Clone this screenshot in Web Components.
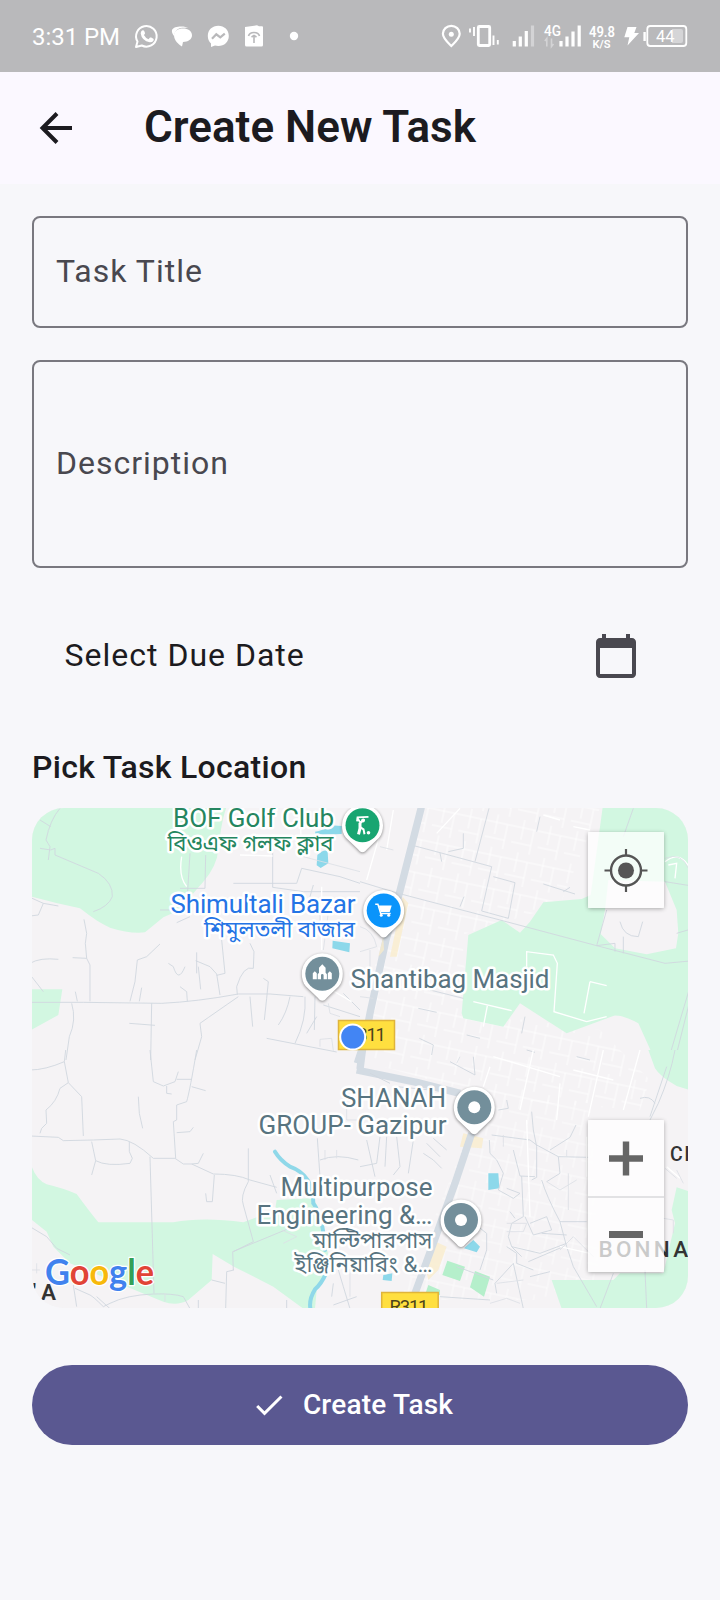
<!DOCTYPE html>
<html lang="en">
<head>
<meta charset="utf-8">
<title>Create New Task</title>
<style>
html,body{margin:0;background:#f7f7fa}
body{font-family:Roboto,"Noto Sans",sans-serif;color:#1c1b20}
</style>
</head>
<body>
<task-screen>
  <status-bar slot="top"></status-bar>
  <app-bar slot="top">Create New Task</app-bar>
  <outlined-field style="--h:112px">Task Title</outlined-field>
  <outlined-field style="--h:208px">Description</outlined-field>
  <date-row>Select Due Date</date-row>
  <section-title>Pick Task Location</section-title>
  <location-map></location-map>
  <filled-button>Create Task</filled-button>
</task-screen>
<script>
const define = (name, html) => {
  const t = document.createElement('template');
  t.innerHTML = html;
  customElements.define(name, class extends HTMLElement {
    constructor() {
      super();
      this.attachShadow({mode: 'open'}).appendChild(t.content.cloneNode(true));
    }
  });
};

define('task-screen', `
<style>
:host{display:flex;flex-direction:column;width:720px;height:1600px;overflow:hidden;background:#f7f7fa}
main{display:flex;flex-direction:column;padding:32px;gap:32px}
</style>
<slot name="top"></slot><main><slot></slot></main>`);

define('status-bar', `
<style>
:host{display:flex;height:72px;background:#b9b9bb;color:#fff;box-sizing:border-box;padding-left:32px;padding-right:30px}
.time{width:96px;font-size:24px;line-height:75px;white-space:nowrap;letter-spacing:-.05px}
svg{display:block;height:72px;flex:none;fill:#fff;font-family:Roboto,sans-serif}
.space{flex:1}
</style>
<span class="time">3:31 PM</span>
<svg width="36" viewBox="128 0 36 72"><path d="M136 47l1.500-5.500a10.300 10.300 0 1 1 4.300 4z" fill="none" stroke="#fff" stroke-width="2" stroke-linejoin="round"/><path d="M142 30.500q1.600-.8 2.200.6l.8 2q.2.800-1.100 2 1.600 3 4.600 4.200l1.500-1.700q.5-.4 1.200 0l2.200 1.100q.8.500 0 2-1.200 1.800-3.600 1.600-8-1.500-9.100-8.800 0-1.900 1.300-3z"/></svg>
<svg width="36" viewBox="164 0 36 72"><path d="M172 30c1-2.500 5-3.500 9-3.500 3.500 0 6 .6 7 1.500-5-.8-13-1-14 8-1.500-2-2.500-4-2-6z"/><path d="M183 28.500c5 0 9 2.500 9 6.700 0 4-4 6.700-9 6.700l-1 4.600c-3-2-8-6-8-11.300 0-4.200 4-6.700 9-6.700z"/></svg>
<svg width="36" viewBox="200 0 36 72"><path d="M218.300 25.800c6 0 10.500 4.200 10.500 10.200s-4.500 10-10.500 10c-1.300 0-2.300-.2-3.300-.5l-4 1.400v-3.500c-2-1.800-3.200-4.200-3.200-7.400 0-6 4.500-10.200 10.500-10.200z"/><path d="M212 38.800l4.300-4.500 4 3 4.500-3.700" fill="none" stroke="#b9b9bb" stroke-width="2.200"/></svg>
<svg width="36" viewBox="236 0 36 72"><path d="M245 27l12-1.700 2 1h3q1 0 1 1V45q0 1.600-1.500 1.600h-15q-1.500 0-1.500-1.600z"/><path d="M248.500 36q1-3.500 5.500-3.500t5.500 3.500M254 43v-7M251.500 37l2.500-1.500 2.500 1.500" fill="none" stroke="#b9b9bb" stroke-width="1.600"/></svg>
<svg width="36" viewBox="272 0 36 72"><circle cx="294" cy="36" r="4.200"/></svg>
<span class="space"></span>
<svg width="28" viewBox="436 0 28 72"><path d="M451.300 46c-3-3-8.400-7.500-8.400-12.200a8.400 8 0 0 1 16.800 0c0 4.700-5.400 9.200-8.400 12.200z" fill="none" stroke="#fff" stroke-width="2.200"/><circle cx="451.300" cy="34.300" r="2.500"/></svg>
<svg width="40" viewBox="464 0 40 72"><rect x="478.300" y="26.500" width="11.400" height="19" rx="1" fill="none" stroke="#fff" stroke-width="2.800"/><path d="M470 28.500v4M474 27v9M493.500 35.500v9.500M497.800 40v4.500" stroke="#fff" stroke-width="1.900"/></svg>
<svg width="36" viewBox="504 0 36 72"><path d="M514.300 41v5.500M520.300 36.500v10M526.300 31v15.500" stroke="#fff" stroke-width="3.200"/><path d="M532.500 25.500v21" stroke="#d3d3d5" stroke-width="3.200"/></svg>
<svg width="44" viewBox="540 0 44 72"><text x="544" y="36.300" font-size="14.500" font-weight="500" textLength="17" lengthAdjust="spacingAndGlyphs">4G</text><path d="M546.800 46.500v-8l-2 2.500M551.500 38.500v8l2-2.500" fill="none" stroke="#d3d3d5" stroke-width="1.600"/><path d="M561 41v5.500M567 36.500v10M573 31.500v15M579.200 25.500v21" stroke="#fff" stroke-width="3.200"/></svg>
<svg width="34" viewBox="584 0 34 72"><text x="589" y="37" font-size="14" font-weight="600" textLength="26" lengthAdjust="spacingAndGlyphs">49.8</text><text x="592.500" y="47.800" font-size="11" font-weight="600" textLength="18" lengthAdjust="spacingAndGlyphs">K/S</text></svg>
<svg width="24" viewBox="618 0 24 72"><path d="M627.500 27h9l-2.200 6h4.700l-11.500 12.500 1.800-8.300h-5z"/></svg>
<svg width="48" viewBox="642 0 48 72"><rect x="647.300" y="26" width="39" height="20" rx="3" fill="none" stroke="#fff" stroke-width="1.800"/><path d="M672 29h9q2 0 2 2v10q0 2-2 2h-9z" fill="#d5d5d7"/><path d="M644.600 32v9" stroke="#fff" stroke-width="2.400"/><text x="656" y="42" font-size="17" textLength="18.500" lengthAdjust="spacingAndGlyphs">44</text></svg>`);

define('app-bar', `
<style>
:host{display:flex;align-items:center;height:112px;background:#fbf8ff;padding-left:32px}
svg{flex:none;margin-right:64px}
h1{margin:0;font-size:44px;line-height:52px;font-weight:600;white-space:nowrap;padding-bottom:2px;letter-spacing:.03px}
</style>
<svg width="48" height="48" viewBox="0 0 48 48"><path d="M40 24H10.500M25 9.500L10.500 24 25 38.500" fill="none" stroke="#1c1b20" stroke-width="4"/></svg>
<h1><slot></slot></h1>`);

define('outlined-field', `
<style>
:host{display:flex;align-items:center;box-sizing:border-box;height:var(--h);border:2px solid #79787f;border-radius:8px;padding:0 22px 2px;color:#49484f;font-size:32px;line-height:48px;letter-spacing:1px}
</style>
<span><slot></slot></span>`);

define('date-row', `
<style>
:host{display:flex;align-items:center;justify-content:space-between;height:112px;box-sizing:border-box;padding:0 48px 0 32.500px;font-size:32px;letter-spacing:1px}
span{padding-bottom:2px}
</style>
<span><slot></slot></span>
<svg width="48" height="48" viewBox="0 0 24 24" fill="#49484f"><path d="M20 3h-1V1h-2v2H7V1H5v2H4c-1.100 0-2 .9-2 2v16c0 1.100.9 2 2 2h16c1.100 0 2-.9 2-2V5c0-1.100-.9-2-2-2zm0 18H4V8h16v13z"/></svg>`);

define('section-title', `
<style>
:host{display:block;height:48px;margin-bottom:-16px;font-size:32px;line-height:46px;font-weight:500;letter-spacing:.3px}
</style><slot></slot>`);

define('map-button', `
<style>
:host{display:flex;align-items:center;justify-content:center;width:76px;height:76px;background:rgba(255,255,255,.74)}
</style><slot></slot>`);

define('location-map', `
<style>
:host{display:block;position:relative;height:500px;border-radius:32px;overflow:hidden;background:#f5f4f5}
.map{display:block;width:656px;height:500px}
.ctl{position:absolute;right:24px;box-shadow:0 1px 4px rgba(0,0,0,.3);border-radius:2px}
.loc{top:24px}
.zoom{top:312px}
.zoom map-button+map-button{box-shadow:inset 0 2px #e2e2e4}
text{font-family:Roboto,"Noto Sans Bengali","Noto Sans",sans-serif}
.lb{font-size:26px;paint-order:stroke;stroke:#fff;stroke-width:5px;stroke-linejoin:round;text-anchor:end}
.bn{font-size:22px}
.road{fill:none;stroke:#d0d7df;stroke-width:2.700;stroke-linejoin:round}
.lane{fill:none;stroke:#fff;stroke-width:4}
.thin{fill:none;stroke:#dce0e6;stroke-width:2.500}
.park{fill:#d2f7e1}
.hw{fill:none;stroke:#d3dbe3;stroke-linejoin:round}
.water{fill:#8cd8ea}
.river{fill:none;stroke:#8fd8e9;stroke-width:12;stroke-linecap:round}
.town{fill:#faecc9;opacity:.75}
.pin path{fill:#fff;filter:drop-shadow(0 1px 1.500px rgba(0,0,0,.45))}
</style>
<svg class="map" viewBox="32 808 656 500">
<defs>
<pattern id="blocks" width="27" height="33" patternUnits="userSpaceOnUse" patternTransform="rotate(12)"><path d="M0 8H27M9 0V20M20 8V33M0 24H20" stroke="#fff" stroke-width="1" fill="none" opacity=".8"/></pattern>
</defs>
<rect x="32" y="808" width="656" height="500" fill="#f5f3f5"/>
<path fill="url(#blocks)" d="M426 808H600L560 905 462 935 468 1012 600 1030 650 1080 640 1110 500 1100 360 1060 380 935z"/>
<path fill="url(#blocks)" opacity=".8" d="M480 1100H590L600 1300H400L450 1180z"/>

<g transform="translate(30 800) scale(.33333)">
<path class="park" d="M0 20H590C575 60 570 110 565 150Q560 200 520 245Q480 290 450 330L400 352Q360 385 345 397Q300 402 240 383C200 365 170 340 150 325Q80 310 6 290zM0 568L97 568 85 645 0 692z"/>
<path class="water" d="M855 95Q880 93 890 75L935 78 935 102 858 105zM862 165Q885 145 893 155L895 190 872 204 860 196zM908 422L960 430 958 457 907 445z"/>
<path class="road" d="M90 25Q60 60 48 120L60 140 55 180M30 60L62 80M30 145L62 150 75 145 75 165 205 220Q250 250 247 290 235 320 190 335M0 348L25 345 40 310 0 292M40 310L85 318M162 358L170 400 166 430 170 475 180 495 180 604M128 473L170 475M0 490Q30 472 85 478M5 530L40 575M136 575L142 604M0 607L160 607 395 610Q500 605 625 582L720 582 820 590M390 432L350 470 322 480 315 545 300 604M335 563L328 604M365 610L362 780M298 670L375 676M125 610Q140 660 118 710L108 780M625 590Q560 635 510 670L515 710 495 780M415 490L430 500Q445 550 465 500M500 457L500 520M497 482L540 500 560 522 570 585M505 500L512 568M450 560L470 575 472 604M575 420L585 520 560 526M660 430L672 455 670 505Q640 495 620 560L622 584M700 535L715 545 710 595 703 660M660 590L668 680M780 590Q770 640 745 675M825 590Q830 660 795 730M710 715L920 756M610 250L800 250 815 205 930 230 990 250M728 155L728 262 820 275 990 275M480 160L472 290M527 165L525 265 450 265M440 368L480 350M390 330L450 330M850 255L840 290M940 580L990 630M855 590L853 690M860 650L830 700M880 615L990 650"/>
<path class="lane" d="M455 170Q445 230 470 260M630 165L728 168M810 25L815 170M780 300L940 325M875 260V450M905 570L965 605"/>
<path class="thin" d="M870 740L870 718 905 715 910 752M820 170L990 215M870 300V390M900 300L880 450M895 610L900 640 930 650"/>
</g>

<g transform="translate(360 800) scale(.33333)">
<path class="park" d="M728 22H990V780H885L835 670Q790 645 762 647L620 700 480 610 430 680 310 655 305 640 325 405 425 360 480 398 510 365 550 307 665 297 692 285z"/>
<path d="M745 240L915 245 950 330 955 400 948 445 860 463 765 445 722 402 735 330z" fill="#f5f3f5"/>
<path class="hw" stroke-width="22" d="M184 22L118 280 78 420 30 640 15 720 -8 790"/>
<path class="town" d="M128 290L145 310 110 470 90 470zM70 410L55 470 72 450z"/>
<path class="road" d="M0 245L115 280 420 360 710 437 915 490 990 483M387 25L345 185M165 138L240 158 395 200 365 333 445 355 465 248 400 230M240 158L245 185M265 155L310 145 310 100M820 25L790 110M740 330L710 437 765 430V455M780 365Q790 410 835 410L848 365M790 410V460M540 50L530 95M550 252L645 282M610 275L630 262M300 320L312 290M990 560L925 780M990 600L945 780M175 625L230 637M210 570L310 595M320 705L360 715M500 750L525 757M178 715L220 735 215 765M495 650L485 700M950 400L990 388M915 245L990 257"/>
<path class="lane" d="M500 500V455L580 465 592 490 582 635 680 665M690 545L740 557M690 545L672 640M340 605L455 632M382 618L370 680M680 665L740 650M550 45L600 60M640 80L690 90M915 185Q960 150 990 205M925 195L950 190 945 235M300 25L230 100M60 100L20 240M100 30L80 150"/>
<path class="thin" d="M915 175Q965 155 985 205M0 380Q40 390 50 440L0 455M30 450V520M60 140L100 150M0 590L40 595"/>
</g>

<g transform="translate(30 1050) scale(.33333)">
<path class="park" d="M6 352Q20 390 50 403 100 415 140 432Q175 480 205 517H430Q520 500 640 517L735 480 740 450 840 445Q870 455 870 520L905 650 860 720 855 776H820L730 710 612 650 548 612 545 690 475 750Q440 770 400 755L120 640 70 590 50 545 6 510z"/>
<path class="river" d="M735 305Q750 330 780 350 850 375 850 460M850 460Q880 500 885 600M888 670Q875 700 855 718 835 750 842 780" />
<path class="road" d="M0 60Q45 60 103 35L107 0M103 35L115 98 155 140 160 258M115 98L90 115Q80 155 48 180L50 220 35 235 30 250M0 258L85 262 100 272 190 270 270 267Q310 270 370 325L435 325 460 342 485 342 550 372Q620 372 660 390L740 412M185 275L197 332Q230 350 300 340L307 325 298 305V275M197 332L185 375M360 320L372 730M360 0L370 95 400 108 435 95 445 65M440 88L485 88M410 108V130L425 132M500 0Q480 120 470 155L440 165 440 210 430 215 437 325M440 248L480 245 490 232M325 140L328 190 338 235M485 110L527 122M655 295V395Q630 440 640 465L670 575M553 375L547 455 530 455 527 430M520 310L505 340 485 342M610 660L608 605 790 530M670 575L610 605M612 660L590 665 587 776M370 732Q290 735 240 760L220 770Q190 740 180 735L135 715M370 732Q430 730 460 740L480 776M545 690L585 700M0 530L50 560 80 595 120 615M130 705L140 770M200 740L240 776M925 660L940 710 960 776M910 700L905 740M910 765L980 740M862 265L870 380M870 330Q920 310 985 330M720 375L740 430M505 750V776M770 750V776"/>
<path class="thin" d="M755 540L800 560 760 580M20 640V670M0 660H30M405 730V755M960 640V740M885 330V300M920 325V300M950 170V210H990"/>
</g>

<g transform="translate(360 1050) scale(.33333)">
<path class="park" d="M865 0H990V120L950 108Q900 80 885 55zM575 690L760 690 780 670H910L945 520 935 480 950 412 990 425V776H605z"/>
<path class="water" d="M385 370H415L418 415 385 420zM340 570L360 590 350 607 312 595zM70 675L97 670 95 693 68 690z"/>
<path fill="#b5efcb" d="M262 632L315 650 300 693 247 675zM345 663L390 680 372 740 330 712zM205 705L240 720 240 735H195z"/>
<path class="town" d="M310 250L370 265 365 295 300 290zM215 570L260 590 235 660 205 690 195 650z"/>
<path class="hw" stroke-width="22" d="M10 -20L0 58"/>
<path class="hw" stroke-width="22" d="M-10 60L170 97 300 130"/>
<path class="hw" stroke-width="22" d="M335 250L285 400 220 580 165 730"/>
<path class="road" d="M945 0Q930 80 895 160L870 210M920 50L870 200M840 145Q870 135 885 160M760 670L720 776M855 660L860 776M515 185L520 240 530 290V382L515 390M395 255L510 270 530 285 595 320 685 322M570 300L630 262 648 225M460 300L480 378 525 380M545 390Q560 440 600 515L620 590 640 650 710 770M485 378L490 500 455 520 445 560 455 590 485 620M510 520L560 500 575 540 520 555 495 500M545 550L620 555M455 590L540 610 620 580M600 515H680M415 420L430 370 410 330 390 310 388 270M415 420L460 445 480 430 440 415M520 660L470 640V610L440 590M505 635L610 590M450 485L465 505M595 320L600 370 560 395M460 640L490 776M460 640L405 700 410 730M270 35L345 75 340 20M30 70L90 100M110 110L210 120M300 530L290 480 380 550V600L360 660M290 650L400 690M240 740L390 750M190 310L220 330 245 355M220 265L260 300M200 280L240 320M0 350L50 340 60 260M20 270L45 380M80 260L75 350M110 260L120 350 100 375M160 270L145 370M440 150L445 175 415 180M650 20L690 30M510 680L570 665"/>
<path class="lane" d="M730 0L685 200M520 0L480 180M640 60L760 90M840 0L790 180M400 20L600 80M390 50L370 110M920 350L960 385M500 210L510 500M600 100L590 210M680 260V380M600 590L690 610"/>
<path class="thin" d="M440 520H500L490 545H440M390 760L440 745 480 760M290 40L300 20M620 320V300M600 600L640 560 700 620M950 360L970 400M915 355L950 385M410 700L490 690M430 255V290M625 370V480M650 390L600 420 560 395M910 505L940 510V550"/>
</g>
<g font-weight="500" fill="#333" font-size="22.500">
<text x="670" y="1160.700" font-size="19.500" letter-spacing="1.500">CI</text>
<text x="598.500" y="1256.700" letter-spacing="3.200">BONNA</text>
<text x="32.500" y="1300">'</text><text x="41" y="1300" font-weight="600">A</text>
</g>
<g>
<rect x="338.500" y="1020.500" width="56" height="29" fill="#ffdf3f" stroke="#dfb43b" stroke-width="1.500"/><text x="347" y="1041" font-size="18.500" fill="#4b431b" textLength="39">R311</text>
<rect x="381.700" y="1292.500" width="56.500" height="29" fill="#ffdf3f" stroke="#dfb43b" stroke-width="1.500"/><text x="389.500" y="1313" font-size="18.500" fill="#4b431b" textLength="39">R311</text>
<circle cx="352.700" cy="1037" r="13.500" fill="#fff"/><circle cx="352.700" cy="1037" r="11.500" fill="#4285f4"/>
</g>
<g class="lb" fill="#258660">
<text x="334" y="827" textLength="161">BOF Golf Club</text><text class="bn" x="333.500" y="851" textLength="166" lengthAdjust="spacingAndGlyphs">বিওএফ গলফ ক্লাব</text></g>
<g class="lb" fill="#2474e5"><text x="355.500" y="912.700" textLength="185">Shimultali Bazar</text><text class="bn" x="355" y="936.500" textLength="151" lengthAdjust="spacingAndGlyphs">শিমুলতলী বাজার</text></g>
<g class="lb" fill="#587480">
<text x="549.500" y="987.700" textLength="199">Shantibag Masjid</text>
<text x="446" y="1107" textLength="105">SHANAH</text><text x="446.500" y="1134" textLength="188">GROUP- Gazipur</text>
<text x="432.500" y="1196.400" textLength="152">Multipurpose</text><text x="432.500" y="1224" textLength="176">Engineering &amp;…</text>
<text class="bn" x="432.500" y="1248" textLength="120" lengthAdjust="spacingAndGlyphs">মাল্টিপারপাস</text><text class="bn" x="432.500" y="1271.700" textLength="138" lengthAdjust="spacingAndGlyphs">ইঞ্জিনিয়ারিং &amp;…</text>
</g>
<g class="pin" transform="translate(362.500 825.300)"><path d="M0 27c-1.800 0-3-1.300-4.500-3L-16.500 12.500C-19.500 9-20.500 4-20.500 0a20.500 20.500 0 0 1 41 0c0 4-1 9-4 12.500L4.500 24C3 25.700 1.800 27 0 27z"/><circle r="17" fill="#18a571"/><g fill="none" stroke="#fff"><polyline points="-5.500,-4 -5,-8 6,-8.500" stroke-width="1.800"/><polyline points="-5,-7 -2,-2.500 2,-6" stroke-width="2"/><polyline points="-2.500,-2.500 -2.500,3 -4,9" stroke-width="3"/><polyline points="-2,2 1,4 2,9" stroke-width="2"/></g><circle cx=".5" cy="-4.800" r="1.900" fill="#fff"/><circle cx="6" cy="7.500" r="1.800" fill="#fff"/></g>
<g class="pin" transform="translate(383.700 910.500)"><path d="M0 27c-1.800 0-3-1.300-4.500-3L-16.500 12.500C-19.500 9-20.500 4-20.500 0a20.500 20.500 0 0 1 41 0c0 4-1 9-4 12.500L4.500 24C3 25.700 1.800 27 0 27z"/><circle r="17" fill="#0a94fb"/><g fill="#fff"><polygon points="-5,-5 8,-5 6,1.500 -3,1.500"/><circle cx="-2.500" cy="4.700" r="1.500"/><circle cx="5" cy="4.700" r="1.500"/></g><polyline points="-8.500,-6.300 -5.800,-6.300 -3,3 7,3" fill="none" stroke="#fff" stroke-width="1.500"/></g>
<g class="pin" transform="translate(322.300 973.700)"><path d="M0 27c-1.800 0-3-1.300-4.500-3L-16.500 12.500C-19.500 9-20.500 4-20.500 0a20.500 20.500 0 0 1 41 0c0 4-1 9-4 12.500L4.500 24C3 25.700 1.800 27 0 27z"/><circle r="17" fill="#738f9b"/><g fill="#fff"><path d="M-9.500 5.500V-.5l2-2 2 2V5.500zM-4.600 5.500V.5l1.300-1.500V-6L0-9.500 3.300-6v5L4.600.5v5H1.300V1.500a1.300 1.300 0 0 0-2.600 0v4zM5.500 5.500V-.5l2-2 2 2V5.500z" style="fill:#fff;filter:none"/></g></g>
<g class="pin" transform="translate(474.300 1107.300)"><path d="M0 27c-1.800 0-3-1.300-4.500-3L-16.500 12.500C-19.500 9-20.500 4-20.500 0a20.500 20.500 0 0 1 41 0c0 4-1 9-4 12.500L4.500 24C3 25.700 1.800 27 0 27z"/><circle r="17" fill="#738f9b"/><circle r="6" fill="#fff"/></g>
<g class="pin" transform="translate(461 1220)"><path d="M0 27c-1.800 0-3-1.300-4.500-3L-16.500 12.500C-19.500 9-20.500 4-20.500 0a20.500 20.500 0 0 1 41 0c0 4-1 9-4 12.500L4.500 24C3 25.700 1.800 27 0 27z"/><circle r="17" fill="#738f9b"/><circle r="6" fill="#fff"/></g>
<text x="45" y="1284.500" font-size="35.500" textLength="109" lengthAdjust="spacingAndGlyphs" style="font-family:Lato,sans-serif;font-weight:700;paint-order:stroke;stroke:#fff;stroke-width:2.500px;stroke-linejoin:round"><tspan fill="#4182ee">G</tspan><tspan fill="#e14437">o</tspan><tspan fill="#f7b90c">o</tspan><tspan fill="#4182ee">g</tspan><tspan fill="#33a056">l</tspan><tspan fill="#e14437">e</tspan></text>
</svg>
<div class="ctl loc"><map-button><svg width="44" height="44" viewBox="-22 -22.500 44 44"><circle r="15" fill="none" stroke="#555" stroke-width="2.400"/><circle r="8" fill="#555"/><path d="M0-21.500v7M0 14.500v7M-21.500 0h7M14.500 0h7" stroke="#555" stroke-width="2.200"/></svg></map-button></div>
<div class="ctl zoom"><map-button><svg width="36" height="36" viewBox="-18 -18.500 36 36"><path d="M-17 0H17M0-17V17" stroke="#666" stroke-width="6.400"/></svg></map-button><map-button><svg width="36" height="36" viewBox="-18 -18 36 36"><path d="M-17 .5H17" stroke="#666" stroke-width="6.800"/></svg></map-button></div>`);

define('filled-button', `
<style>
:host{display:flex;align-items:center;justify-content:center;gap:16px;height:80px;margin-top:24.500px;border-radius:40px;background:#5a5891;color:#fff;font-size:28px;font-weight:500;letter-spacing:.2px;box-sizing:border-box;padding-right:16px}
svg{flex:none}
</style>
<svg width="36" height="36" viewBox="0 0 24 24" fill="#fff"><path d="M9 16.170L4.830 12l-1.420 1.410L9 19 21 7l-1.410-1.410z"/></svg>
<span><slot></slot></span>`);
</script>
</body>
</html>
